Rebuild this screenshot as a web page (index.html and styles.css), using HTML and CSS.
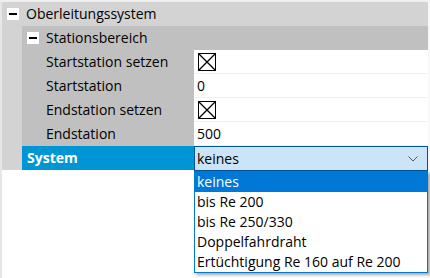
FILE: index.html
```html
<!DOCTYPE html>
<html lang="de">
<head>
    <meta charset="UTF-8">
    <title>Eigenschaften</title>
    <link rel="stylesheet" href="styles.css">
</head>
<body>
    <div class="grid">
        <div class="cat">
            <span class="toggle"></span>
            <span class="cat-name">Oberleitungssystem</span>
        </div>
        <div class="cat-body">
            <div class="gutter"></div>
            <div class="cat-items">
                <div class="sub">
                    <span class="toggle"></span>
                    <span class="cat-name">Stationsbereich</span>
                </div>
                <div class="prop">
                    <div class="prop-name">Startstation setzen</div>
                    <div class="prop-value">
                        <svg class="check" width="18" height="18" viewBox="0 0 18 18">
                            <rect x="0.5" y="0.5" width="17" height="17" fill="#fff" stroke="#000"/>
                            <path d="M1 1 L17 17 M17 1 L1 17" stroke="#000" stroke-width="1.3"/>
                        </svg>
                    </div>
                </div>
                <div class="prop">
                    <div class="prop-name">Startstation</div>
                    <div class="prop-value">0</div>
                </div>
                <div class="prop">
                    <div class="prop-name">Endstation setzen</div>
                    <div class="prop-value">
                        <svg class="check" width="18" height="18" viewBox="0 0 18 18">
                            <rect x="0.5" y="0.5" width="17" height="17" fill="#fff" stroke="#000"/>
                            <path d="M1 1 L17 17 M17 1 L1 17" stroke="#000" stroke-width="1.3"/>
                        </svg>
                    </div>
                </div>
                <div class="prop">
                    <div class="prop-name">Endstation</div>
                    <div class="prop-value">500</div>
                </div>
                <div class="prop selected">
                    <div class="prop-name">System</div>
                    <div class="prop-value">
                        <div class="combo">
                            <span>keines</span>
                            <svg class="chevron" width="10" height="6" viewBox="0 0 10 6">
                                <path d="M0.5 0.5 L5 5 L9.5 0.5" fill="none" stroke="#5a5a5a" stroke-width="1"/>
                            </svg>
                        </div>
                    </div>
                </div>
            </div>
        </div>
    </div>

    <ul class="dropdown">
        <li class="active">keines</li>
        <li>bis Re 200</li>
        <li>bis Re 250/330</li>
        <li>Doppelfahrdraht</li>
        <li>Ertüchtigung Re 160 auf Re 200</li>
    </ul>
</body>
</html>
```

FILE: styles.css
```css
body {
    margin: 0;
    background: #fff;
    font-family: 'Open Sans', 'Noto Sans', sans-serif;
    font-size: 14px;
    color: #000;
    height: 278px;
    overflow: hidden;
}

.grid {
    height: 276px;
    width: 426px;
    border-top: 2px solid #f0f0f0;
    border-left: 2px solid #e6e6e6;
    border-right: 2px solid #f8f8f8;
}

.cat,
.sub {
    display: flex;
    align-items: center;
    height: 24px;
}

.cat {
    background: #d3d3d3;
    padding-left: 5px;
}

.sub {
    background: #c0c0c0;
    padding-left: 5px;
}

.toggle {
    position: relative;
    width: 12px;
    height: 12px;
    background: #fff;
    margin-right: 7px;
    flex-shrink: 0;
}

.toggle::after {
    content: '';
    position: absolute;
    left: 2px;
    top: 5px;
    width: 8px;
    height: 2px;
    background: #000;
}

.cat-name {
    line-height: 24px;
}

.cat-body {
    display: flex;
}

.gutter {
    width: 20px;
    background: #d3d3d3;
}

.cat-items {
    flex: 1;
}

.prop {
    display: flex;
    height: 24px;
}

.prop-name {
    width: 148px;
    padding-left: 24px;
    background: #c0c0c0;
    line-height: 24px;
    white-space: nowrap;
}

.prop-value {
    flex: 1;
    display: flex;
    align-items: center;
    padding-left: 3px;
    background: #fff;
    border-bottom: 1px solid #f0f0f0;
    box-sizing: border-box;
}

.check {
    display: block;
    margin-left: 1px;
}

.selected .prop-name {
    background: #0096d6;
    color: #fff;
    font-weight: bold;
    padding-left: 5px;
    width: 167px;
}

.selected .prop-value {
    padding-left: 0;
    border-bottom: none;
    align-items: stretch;
}

.combo {
    flex: 1;
    display: flex;
    align-items: center;
    justify-content: space-between;
    padding: 0 9px 0 2px;
    background: #cce4f7;
    border: 1px solid #005499;
    height: 25px;
    box-sizing: border-box;
}

.chevron {
    display: block;
}

.dropdown {
    position: absolute;
    left: 194px;
    top: 171px;
    width: 234px;
    box-sizing: border-box;
    margin: 0;
    padding: 0;
    list-style: none;
    background: #fff;
    border: 1px solid #0078d7;
    box-shadow: 2px 2px 3px rgba(0, 0, 0, 0.35);
}

.dropdown li {
    height: 20px;
    line-height: 20px;
    padding-left: 2px;
    white-space: nowrap;
}

.dropdown li.active {
    background: #0078d7;
    color: #fff;
}
```
